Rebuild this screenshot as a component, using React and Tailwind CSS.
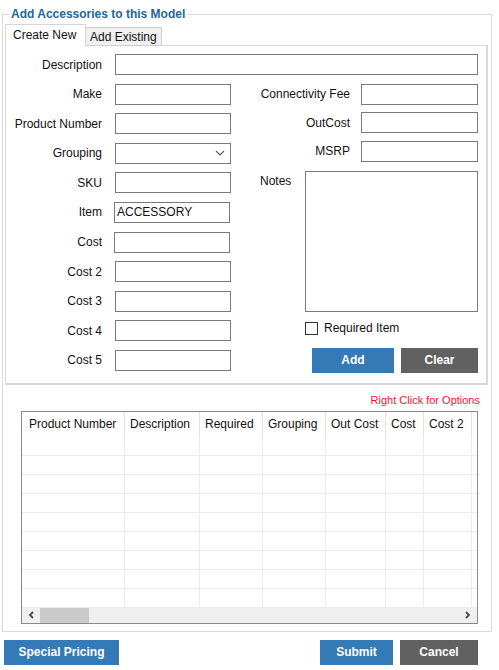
import React from "react";

const inputCls =
  "h-[21px] border border-[#7a7a7a] bg-white px-[2px] text-[12px] text-[#111] outline-none";

function LeftRow({ label, children }) {
  return (
    <div className="flex h-[21px] items-center">
      <span className="w-[96px] text-right leading-[14px]">{label}</span>
      <div className="ml-[13px] flex">{children}</div>
    </div>
  );
}

function RightRow({ label }) {
  return (
    <div className="flex h-[21px] items-center">
      <span className="w-[119px] text-right leading-[14px]">{label}</span>
      <input className={inputCls + " ml-[11px] w-[117px]"} />
    </div>
  );
}

const cols = [
  { name: "Product Number", w: "w-[103px]", pl: "pl-[7px]" },
  { name: "Description", w: "w-[75px]", pl: "pl-[5px]" },
  { name: "Required", w: "w-[63px]", pl: "pl-[5px]" },
  { name: "Grouping", w: "w-[63px]", pl: "pl-[5px]" },
  { name: "Out Cost", w: "w-[60px]", pl: "pl-[5px]" },
  { name: "Cost", w: "w-[38px]", pl: "pl-[5px]" },
  { name: "Cost 2", w: "w-[48px]", pl: "pl-[5px]" },
  { name: "", w: "w-[60px]", pl: "pl-[5px]" },
];

export default function App() {
  return (
    <div className="h-[670px] w-[499px] bg-white pt-[6px] font-['Liberation_Sans',Arial,sans-serif] text-[12px] text-[#111]">
      <fieldset className="ml-[2px] w-[490px] border border-[#dadada] pb-[7px] pl-[2px] pr-[3px] pt-[2px]">
        <legend className="ml-[4px] px-[2px] text-[12px] font-bold leading-[16px] text-[#22679a]">
          Add Accessories to this Model
        </legend>

        {/* Tabs */}
        <div className="flex h-[22px] items-end">
          <div className="relative z-10 h-[22px] w-[81px] border border-b-0 border-[#d6d6d6] bg-white pl-[7px] pt-[3px] leading-[14px]">
            Create New
          </div>
          <div className="h-[19px] w-[76px] border border-l-0 border-[#cfcfcf] bg-[#f0f0f0] pl-[4px] pt-[2px] leading-[14px]">
            Add Existing
          </div>
        </div>

        {/* Panel */}
        <div className="-mt-px border border-b-2 border-r-2 border-[#d8d8d8] pb-[10px] pt-[8px]">
          <LeftRow label="Description">
            <input className={inputCls + " w-[363px]"} />
          </LeftRow>

          <div className="mt-[8.6px] flex">
            {/* left column */}
            <div className="flex w-[225px] flex-col gap-[8.6px]">
              <LeftRow label="Make">
                <input className={inputCls + " w-[116px]"} />
              </LeftRow>
              <LeftRow label="Product Number">
                <input className={inputCls + " w-[116px]"} />
              </LeftRow>
              <LeftRow label="Grouping">
                <div className="flex h-[21px] w-[116px] items-center justify-end border border-[#7a7a7a] bg-white pr-[5px]">
                  <svg width="10" height="6" viewBox="0 0 10 6">
                    <polyline
                      points="1,1 5,5 9,1"
                      fill="none"
                      stroke="#555"
                      strokeWidth="1.1"
                    />
                  </svg>
                </div>
              </LeftRow>
              <LeftRow label="SKU">
                <input className={inputCls + " w-[116px]"} />
              </LeftRow>
              <LeftRow label="Item">
                <input
                  className={inputCls + " -ml-px w-[116px]"}
                  defaultValue="ACCESSORY"
                />
              </LeftRow>
              <LeftRow label="Cost">
                <input className={inputCls + " -ml-px w-[116px]"} />
              </LeftRow>
              <LeftRow label="Cost 2">
                <input className={inputCls + " w-[116px]"} />
              </LeftRow>
              <LeftRow label="Cost 3">
                <input className={inputCls + " w-[116px]"} />
              </LeftRow>
              <LeftRow label="Cost 4">
                <input className={inputCls + " w-[116px]"} />
              </LeftRow>
              <LeftRow label="Cost 5">
                <input className={inputCls + " w-[116px]"} />
              </LeftRow>
            </div>

            {/* right column */}
            <div className="flex w-[247px] flex-col">
              <div className="flex flex-col gap-[7.5px]">
                <RightRow label="Connectivity Fee" />
                <RightRow label="OutCost" />
                <RightRow label="MSRP" />
              </div>
              <div className="mt-[9.4px] flex">
                <span className="w-[74px] pl-[29px] pt-[3px] leading-[14px]">
                  Notes
                </span>
                <textarea className="h-[141px] w-[173px] resize-none border border-[#7a7a7a] bg-white outline-none" />
              </div>
              <div className="mt-[10px] flex h-[13px] items-center pl-[74px]">
                <span className="h-[13px] w-[13px] border border-[#333] bg-white" />
                <span className="ml-[6px] leading-[14px]">Required Item</span>
              </div>
              <div className="mt-[13px] flex justify-end gap-[7px]">
                <button className="h-[25px] w-[82px] bg-[#337ab7] text-[12px] font-bold text-white">
                  Add
                </button>
                <button className="h-[25px] w-[77px] bg-[#616161] text-[12px] font-bold text-white">
                  Clear
                </button>
              </div>
            </div>
          </div>
        </div>

        {/* Right click hint */}
        <div className="mt-[8px] pr-[8px] text-right text-[11px] leading-[14px] text-[#ff1030]">
          Right Click for Options
        </div>

        {/* Grid */}
        <div className="ml-[16px] mt-[4px] flex h-[213px] w-[457px] flex-col overflow-hidden border border-[#8a8a8a] bg-white">
          <div className="flex h-[25px] shrink-0">
            {cols.map((c, i) => (
              <div
                key={i}
                className={`${c.w} ${c.pl} flex shrink-0 items-center overflow-hidden whitespace-nowrap border-r border-[#e2e2e2] leading-[14px]`}
              >
                {c.name}
              </div>
            ))}
          </div>
          <div className="flex-1 overflow-hidden">
            {Array.from({ length: 9 }).map((_, r) => (
              <div key={r} className="flex h-[19px]">
                {cols.map((c, i) => (
                  <div
                    key={i}
                    className={`${c.w} shrink-0 border-b border-r border-[#ececec]`}
                  />
                ))}
              </div>
            ))}
          </div>
          <div className="flex h-[15px] shrink-0 items-center bg-[#efefef]">
            <div className="flex h-[15px] w-[18px] items-center justify-center">
              <svg width="6" height="8" viewBox="0 0 6 8">
                <polyline
                  points="5,1 2,4 5,7"
                  fill="none"
                  stroke="#4a4a4a"
                  strokeWidth="1.8"
                />
              </svg>
            </div>
            <div className="h-[15px] w-[49px] bg-[#c9c9c9]" />
            <div className="flex-1" />
            <div className="flex h-[15px] w-[18px] items-center justify-center">
              <svg width="6" height="8" viewBox="0 0 6 8">
                <polyline
                  points="1,1 4,4 1,7"
                  fill="none"
                  stroke="#4a4a4a"
                  strokeWidth="1.8"
                />
              </svg>
            </div>
          </div>
        </div>
      </fieldset>

      {/* Footer buttons */}
      <div className="mt-[8px] flex justify-between pl-[4px] pr-[21px]">
        <button className="h-[25px] w-[115px] bg-[#337ab7] text-[12px] font-bold text-white">
          Special Pricing
        </button>
        <div className="flex gap-[7px]">
          <button className="h-[25px] w-[73px] bg-[#337ab7] text-[12px] font-bold text-white">
            Submit
          </button>
          <button className="h-[25px] w-[78px] bg-[#616161] text-[12px] font-bold text-white">
            Cancel
          </button>
        </div>
      </div>
    </div>
  );
}
